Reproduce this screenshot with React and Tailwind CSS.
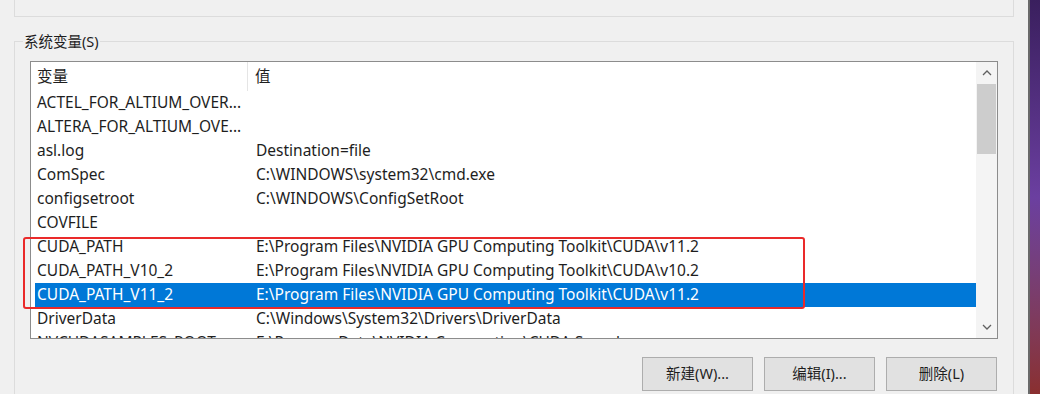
import React from 'react';

const rows = [
  { name: 'ACTEL_FOR_ALTIUM_OVER...', value: '' },
  { name: 'ALTERA_FOR_ALTIUM_OVE...', value: '' },
  { name: 'asl.log', value: 'Destination=file' },
  { name: 'ComSpec', value: 'C:\\WINDOWS\\system32\\cmd.exe' },
  { name: 'configsetroot', value: 'C:\\WINDOWS\\ConfigSetRoot' },
  { name: 'COVFILE', value: '' },
  { name: 'CUDA_PATH', value: 'E:\\Program Files\\NVIDIA GPU Computing Toolkit\\CUDA\\v11.2' },
  { name: 'CUDA_PATH_V10_2', value: 'E:\\Program Files\\NVIDIA GPU Computing Toolkit\\CUDA\\v10.2' },
  { name: 'CUDA_PATH_V11_2', value: 'E:\\Program Files\\NVIDIA GPU Computing Toolkit\\CUDA\\v11.2', selected: true },
  { name: 'DriverData', value: 'C:\\Windows\\System32\\Drivers\\DriverData' },
  { name: 'NVCUDASAMPLES_ROOT', value: 'E:\\ProgramData\\NVIDIA Corporation\\CUDA Samples' },
];

const font = { fontFamily: '"Noto Sans", "Noto Sans CJK SC", sans-serif' };

const Chevron = ({ up }) => (
  <svg width="10" height="6" viewBox="0 0 10 6" className="text-[#606060]">
    <path
      d={up ? 'M1 5 L5 1 L9 5' : 'M1 1 L5 5 L9 1'}
      fill="none"
      stroke="currentColor"
      strokeWidth="1.3"
    />
  </svg>
);

const App = () => {
  return (
    <div
      className="relative w-[1040px] h-[394px] overflow-hidden bg-[#f0f0f0] flex text-[#1e1e1e]"
      style={font}
    >
      {/* Dialog */}
      <div className="w-[1028px] h-full">
        {/* Previous group box bottom edge */}
        <div className="ml-[14px] w-[1000px] h-[17px] border-l border-r border-b border-[#dcdcdc]" />

        {/* System variables group */}
        <fieldset className="ml-[14px] mt-[15px] w-[1000px] h-[400px] border border-[#dcdcdc] pl-[15px]">
          <legend className="-ml-[7px] px-[1px] text-[14.5px] leading-[18px] text-[#1e1e1e]">系统变量(S)</legend>

          {/* List view */}
          <div className="mt-[11px] w-[968px] h-[278px] border border-[#8c8c8c] bg-white flex overflow-hidden">
            <div className="flex-1 flex flex-col text-[15.5px]">
              {/* Header */}
              <div className="flex h-[29px] shrink-0">
                <div className="w-[217px] pl-[6px] flex items-center border-r border-[#e5e5e5]">变量</div>
                <div className="flex-1 pl-[7px] flex items-center">值</div>
              </div>
              {/* Rows */}
              {rows.map((r) => (
                <div
                  key={r.name}
                  className={
                    r.selected
                      ? 'flex h-[24px] shrink-0 items-center ml-[4px] bg-[#0078d7] text-white'
                      : 'flex h-[24px] shrink-0 items-center ml-[4px]'
                  }
                >
                  <div className="w-[213px] pl-[2px] whitespace-nowrap overflow-hidden">{r.name}</div>
                  <div className="flex-1 pl-[8px] whitespace-nowrap">{r.value}</div>
                </div>
              ))}
            </div>

            {/* Scrollbar */}
            <div className="w-[21px] h-full bg-[#f4f4f4] flex flex-col">
              <div className="h-[22px] flex items-center justify-center">
                <Chevron up />
              </div>
              <div className="mx-[1px] h-[70px] bg-[#cdcdcd]" />
              <div className="flex-1" />
              <div className="h-[22px] flex items-center justify-center">
                <Chevron />
              </div>
            </div>
          </div>

          {/* Buttons */}
          <div className="mt-[18px] w-[967px] flex justify-end gap-[11px] text-[14.5px]">
            <button className="w-[111px] h-[34px] bg-[#e1e1e1] border border-[#adadad]">新建(W)...</button>
            <button className="w-[111px] h-[34px] bg-[#e1e1e1] border border-[#adadad]">编辑(I)...</button>
            <button className="w-[111px] h-[34px] bg-[#e1e1e1] border border-[#adadad]">删除(L)</button>
          </div>
        </fieldset>
      </div>

      {/* Desktop wallpaper strip */}
      <div className="w-[2px] h-full bg-[#6a6a6a]" />
      <div className="flex-1 h-full bg-gradient-to-b from-[#3a1f5e] via-[#6b3fa0] to-[#8a2f2f]" />

      {/* Red annotation box */}
      <div className="absolute left-[23px] top-[237px] w-[782px] h-[72px] border-2 border-[#ea2a2a] rounded-[3px]" />
    </div>
  );
};

export default App;
